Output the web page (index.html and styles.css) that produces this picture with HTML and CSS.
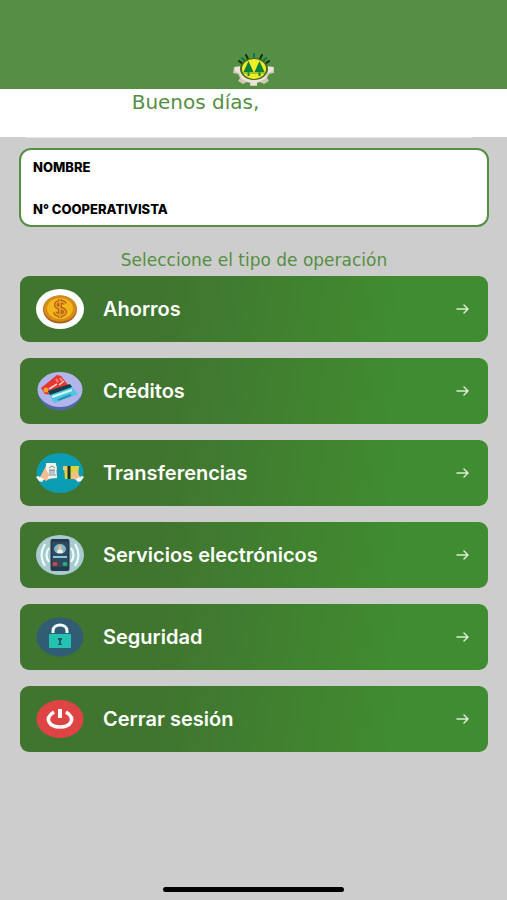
FILE: index.html
```html
<!DOCTYPE html>
<html lang="es">
<head>
    <meta charset="UTF-8">
    <meta name="viewport" content="width=device-width, initial-scale=1.0">
    <title>Menú principal</title>
    <link rel="stylesheet" href="styles.css">
</head>
<body>
    <header class="topbar">
        <svg class="logo" viewBox="0 0 42 34" aria-hidden="true">
            <g stroke="#172d17" stroke-width="2" stroke-linecap="round">
                <path d="M6 9l4 3M13 3l2 4M29 3l-2 4M36 9l-4 3"/>
                <path d="M21 2v3M9 6l3 3M33 6l-3 3" stroke="#087a4b"/>
            </g>
            <path d="M1 15l6-1 2 3h24l2-3 6 1v6l-5 1-2 4 2 3-5 3-4-2-3 1v3h-7v-3l-3-1-4 2-5-3 2-3-2-4-5-1z" fill="#d0c7b8"/>
            <path d="M2 15l5 0 3 8 6 4h10l6-4 3-8h5v4l-5 2-3 6-6 3h-2v3h-6v-3h-3l-6-3-3-6-4-2z" fill="#eae5da"/>
            <ellipse cx="21" cy="17" rx="14" ry="11" fill="#486b20"/>
            <ellipse cx="21" cy="17" rx="12" ry="10" fill="#f5ed24"/>
            <path d="M15.500 9l-5 11h4v4h2v-4h4zM26.500 9l-5 11h4v4h2v-4h4z" fill="#07813e"/>
            <path d="M10 21h22" stroke="#61991f" stroke-width="1"/>
        </svg>
    </header>
    <div class="greeting">
        <h1>Buenos días,</h1>
    </div>
    <div class="greeting-edge"></div>

    <main>
        <div class="member">
            <p>NOMBRE</p>
            <p>N° COOPERATIVISTA</p>
        </div>

        <h2>Seleccione el tipo de operación</h2>

        <nav class="menu">
            <button class="option">
                <svg class="icon" viewBox="0 0 48 40" aria-hidden="true">
                    <ellipse cx="24" cy="20" rx="24" ry="20" fill="#fff"/>
                    <ellipse cx="24" cy="20.500" rx="17" ry="14" fill="#a66415"/>
                    <ellipse cx="24" cy="19.500" rx="16.500" ry="13" fill="#d68b18"/>
                    <ellipse cx="24" cy="19.500" rx="13" ry="10.500" fill="#f2b51c"/>
                    <path d="M29 15c-1-3-9-3-9 1 0 4 9 3 9 7 0 4-9 4-10 0M24 10v19" fill="none" stroke="#b45f14" stroke-width="4"/>
                    <path d="M29 15c-1-3-9-3-9 1 0 4 9 3 9 7 0 4-9 4-10 0M24 10v19" fill="none" stroke="#eda321" stroke-width="1.500"/>
                </svg>
                <span>Ahorros</span>
                <svg class="arrow" viewBox="0 0 14 12" aria-hidden="true"><path d="M1 6h11M8 2l4 4-4 4"/></svg>
            </button>
            <button class="option">
                <svg class="icon" viewBox="0 0 48 40" aria-hidden="true">
                    <ellipse cx="24" cy="21" rx="22" ry="18.500" fill="#5264aa"/>
                    <ellipse cx="24" cy="18.500" rx="22.500" ry="17.500" fill="#b2b5e9"/>
                    <path d="M5 17l16-13 4 1 8 10-18 9-6-1z" fill="#e53535"/>
                    <path d="M20 8l2 3M24 7l2 3" stroke="#ff8b80" stroke-width="2"/>
                    <path d="M13 18l8-5M23 14l5-4" stroke="#ffd2c5" stroke-width="1.500"/>
                    <circle cx="10" cy="19" r="2.500" fill="#f4a125"/>
                    <path d="M12 21l22-7 8 9-24 9z" fill="#4bc6e4"/>
                    <path d="M12 20l22-7 2 3-22 8z" fill="#153d4c"/>
                    <path d="M16 26l20-7" stroke="#dcf5ed" stroke-width="2"/>
                    <path d="M22 29l13-5" stroke="#2591b2" stroke-width="2"/>
                </svg>
                <span>Créditos</span>
                <svg class="arrow" viewBox="0 0 14 12" aria-hidden="true"><path d="M1 6h11M8 2l4 4-4 4"/></svg>
            </button>
            <button class="option">
                <svg class="icon" viewBox="0 0 48 40" aria-hidden="true">
                    <ellipse cx="24" cy="20" rx="23.500" ry="20" fill="#0b9db3"/>
                    <path d="M4 24l6-11 5 2 6-2v4l-5 2-1 6-5 3z" fill="#f6bd91"/>
                    <path d="M10 10h10l1 15-11 1z" fill="#f4f3ea"/>
                    <path d="M13 15l3-2 3 2M13 17h6M14 17v4M16 17v4M18 17v4M12 22h8" fill="none" stroke="#7b8f99" stroke-width="1"/>
                    <path d="M10 17l3 4-2 6-7-2z" fill="#f6bd91"/>
                    <path d="M0 24l2-1 6 3-2 3-3-1z" fill="#fff"/>
                    <path d="M28 13h15l-1 13H29z" fill="#d8d639"/>
                    <path d="M33 13v13" stroke="#222f2b" stroke-width="3"/>
                    <path d="M27 13l4 2v3l-4-1zM44 24l-5-9-1 7-3-2v4l6 4z" fill="#f6bd91"/>
                    <path d="M48 24l-2-1-6 3 2 3 3-1z" fill="#fff"/>
                </svg>
                <span>Transferencias</span>
                <svg class="arrow" viewBox="0 0 14 12" aria-hidden="true"><path d="M1 6h11M8 2l4 4-4 4"/></svg>
            </button>
            <button class="option">
                <svg class="icon" viewBox="0 0 48 40" aria-hidden="true">
                    <ellipse cx="24" cy="20" rx="24" ry="20" fill="#a9cbd0"/>
                    <path d="M9 9q-7 11 0 22M13 13q-5 7 0 14M39 9q7 11 0 22M35 13q5 7 0 14" fill="none" stroke="#f1ffff" stroke-width="2"/>
                    <rect x="14.500" y="4" width="19" height="32" rx="2" fill="#24394d"/>
                    <rect x="16" y="7" width="16" height="25" fill="#31495e"/>
                    <ellipse cx="24" cy="14" rx="6" ry="5" fill="#82b5c6"/>
                    <path d="M21 18q0-4 3-4t3 4z" fill="#f2ede4"/>
                    <ellipse cx="24" cy="12.500" rx="1.500" ry="2.500" fill="#efc18f"/>
                    <path d="M17 22h14" stroke="#8ac9dc" stroke-width="2"/>
                    <ellipse cx="19" cy="29" rx="2.500" ry="2" fill="#d94446"/>
                    <ellipse cx="29" cy="29" rx="2.500" ry="2" fill="#24b57a"/>
                </svg>
                <span>Servicios electrónicos</span>
                <svg class="arrow" viewBox="0 0 14 12" aria-hidden="true"><path d="M1 6h11M8 2l4 4-4 4"/></svg>
            </button>
            <button class="option">
                <svg class="icon" viewBox="0 0 48 40" aria-hidden="true">
                    <ellipse cx="24" cy="20" rx="23.500" ry="19.500" fill="#305d73"/>
                    <path d="M17 16v-2c0-8 14-8 14 0v2" fill="none" stroke="#f4f8ff" stroke-width="3"/>
                    <rect x="13" y="17" width="22" height="14" rx="1" fill="#24c3b1"/>
                    <path d="M22 21h4v2h-1v4h1v1h-4v-1h1v-4h-1z" fill="#1d5b68"/>
                </svg>
                <span>Seguridad</span>
                <svg class="arrow" viewBox="0 0 14 12" aria-hidden="true"><path d="M1 6h11M8 2l4 4-4 4"/></svg>
            </button>
            <button class="option">
                <svg class="icon" viewBox="0 0 48 40" aria-hidden="true">
                    <ellipse cx="24" cy="20" rx="23.500" ry="19" fill="#df4444"/>
                    <path d="M18 13c-11 7-4 15 6 15s17-8 6-15" fill="none" stroke="#fff" stroke-width="3.500"/>
                    <path d="M24 10v9" stroke="#fff" stroke-width="4"/>
                </svg>
                <span>Cerrar sesión</span>
                <svg class="arrow" viewBox="0 0 14 12" aria-hidden="true"><path d="M1 6h11M8 2l4 4-4 4"/></svg>
            </button>
        </nav>
    </main>

    <div class="home-bar"></div>
</body>
</html>
```

FILE: styles.css
```css
*{
    margin: 0;
    padding: 0;
    box-sizing: border-box;
}
body{
    min-height: 100vh;
    display: flex;
    flex-direction: column;
    background-color: #cdcdcd;
    font-family: "Inter", "Liberation Sans", sans-serif;
}
.topbar{
    padding: 52px 0 3px;
    display: flex;
    justify-content: center;
    background-color: #558f43;
}
.logo{
    width: 42px;
    height: 34px;
}
.greeting{
    height: 48px;
    background-color: white;
    text-align: center;
    padding-right: 116px;
}
.greeting-edge{
    height: 1px;
    margin: 0 35px 0 26px;
    background-color: #e6e6e6;
}
h1{
    color: #558f43;
    font-family: "DejaVu Sans", sans-serif;
    font-size: 20px;
    font-weight: 400;
    line-height: 26px;
}
main{
    padding: 10px 18px 0 19px;
}
.member{
    display: flex;
    flex-direction: column;
    gap: 26px;
    padding: 9px 12px 8px;
    border: 2px solid #558f43;
    border-radius: 12px;
    background-color: white;
}
.member p{
    font-size: 13px;
    font-weight: 800;
    line-height: 16px;
}
h2{
    color: #558f43;
    font-family: "DejaVu Sans", sans-serif;
    font-size: 17px;
    font-weight: 400;
    line-height: 24px;
    text-align: center;
    margin: 21px 0 4px;
}
.menu{
    display: flex;
    flex-direction: column;
    gap: 16px;
    padding: 0 1px;
}
.option{
    height: 66px;
    display: flex;
    align-items: center;
    padding: 0 18px 0 16px;
    border: none;
    border-radius: 9px;
    background: linear-gradient(100deg, #40752f 30%, #408c30 80%);
    color: white;
    font-family: inherit;
    font-size: 20px;
    font-weight: 600;
    text-align: left;
    cursor: pointer;
}
.option span{
    flex: 1;
    margin-left: 19px;
}
.icon{
    width: 48px;
    height: 40px;
}
.arrow{
    width: 14px;
    height: 12px;
    fill: none;
    stroke: #dcebd8;
    stroke-width: 1.5;
    stroke-linecap: round;
    stroke-linejoin: round;
}
.home-bar{
    width: 181px;
    height: 5px;
    margin: auto auto 8px;
    border-radius: 3px;
    background-color: black;
}
```
